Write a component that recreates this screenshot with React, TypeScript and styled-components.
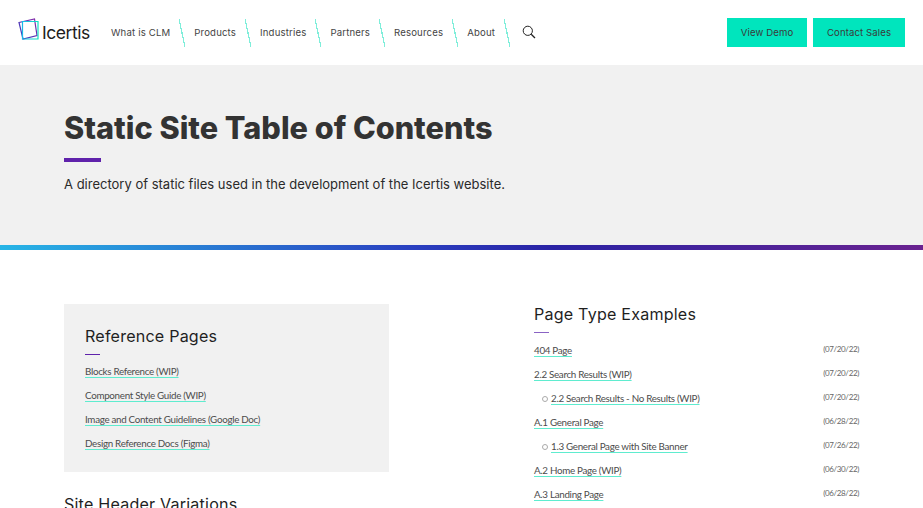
import styled, { createGlobalStyle } from 'styled-components';
import { Fragment } from 'react';

const GlobalStyle = createGlobalStyle`
  html, body {
    margin: 0;
    padding: 0;
    height: 100%;
    overflow: hidden;
    background: #ffffff;
  }
  * {
    box-sizing: border-box;
  }
`;

const Header = styled.header`
  height: 65px;
  display: flex;
  align-items: center;
  padding: 0 18px;
  background: #ffffff;
`;

const Logo = styled.a`
  display: flex;
  align-items: center;
  gap: 2px;
  width: 93px;
  flex: none;
  margin-top: -6px;
`;

const LogoText = styled.span`
  font-family: 'Inter', sans-serif;
  font-size: 17.5px;
  font-weight: 400;
  letter-spacing: -0.45px;
  color: #1c1c1c;
  margin-top: 5px;
`;

const Nav = styled.nav`
  display: flex;
  align-items: center;
  gap: 9px;
`;

const NavLink = styled.a`
  font-family: 'Inter', sans-serif;
  font-size: 9.6px;
  letter-spacing: 0.16px;
  color: #444444;
`;

const Slash = styled.span`
  width: 6px;
  height: 28px;
  flex: none;
  background: linear-gradient(
    to top right,
    transparent calc(50% - 0.6px),
    #7feeda calc(50% - 0.6px),
    #7feeda calc(50% + 0.6px),
    transparent calc(50% + 0.6px)
  );
`;

const SearchButton = styled.button`
  display: flex;
  border: 0;
  background: none;
  padding: 0;
  margin-left: 3px;
  margin-top: -1px;
`;

const Actions = styled.div`
  display: flex;
  gap: 6px;
  margin-left: auto;
`;

const CtaButton = styled.a<{ $width: number }>`
  width: ${p => p.$width}px;
  height: 29px;
  display: flex;
  align-items: center;
  justify-content: center;
  background: #00e5bd;
  font-family: 'Inter', sans-serif;
  font-size: 9.6px;
  letter-spacing: 0.1px;
  color: #3a3a3a;
`;

const Hero = styled.section`
  height: 180px;
  background: #f1f1f1;
  padding: 44px 64px 0;
`;

const Title = styled.h1`
  margin: 0;
  font-family: 'Inter', sans-serif;
  font-size: 30.65px;
  line-height: 38px;
  font-weight: 800;
  letter-spacing: 0;
  color: #333333;
`;

const HeroRule = styled.div`
  width: 37px;
  height: 4px;
  margin-top: 11px;
  background: #5f22ab;
`;

const Lead = styled.p`
  margin: 13px 0 0;
  font-family: 'Inter', sans-serif;
  font-size: 13px;
  line-height: 18px;
  letter-spacing: 0;
  color: #2a2a2a;
`;

const GradientBar = styled.div`
  height: 5px;
  background: linear-gradient(90deg, #27b5e6 0%, #2a3fc0 45%, #2a22a4 60%, #6a2290 100%);
`;

const Content = styled.main`
  display: grid;
  grid-template-columns: 325px 325px;
  column-gap: 145px;
  padding: 54px 64px 0;
`;

const LeftColumn = styled.div`
  display: flex;
  flex-direction: column;
`;

const Card = styled.section`
  height: 168px;
  background: #f1f1f1;
  padding: 20px 21px 0;
`;

const SectionTitle = styled.h2`
  margin: 0;
  font-family: 'Inter', sans-serif;
  font-size: 16.1px;
  line-height: 24px;
  font-weight: 400;
  letter-spacing: 0.2px;
  color: #1f1f1f;
`;

const SmallRule = styled.div`
  width: 15px;
  height: 1px;
  margin: 6px 0 4px;
  background: #5f22ab;
`;

const ColumnRule = styled(SmallRule)`
  margin-bottom: 5px;
  background: #8a63c4;
`;

const LinkList = styled.ul`
  list-style: none;
  margin: 0;
  padding: 0;
`;

const LinkRow = styled.li<{ $nested?: boolean }>`
  height: 24px;
  display: flex;
  align-items: center;
  justify-content: space-between;
  padding-left: ${p => (p.$nested ? 17 : 0)}px;
  position: relative;
  font-family: 'Lato', sans-serif;
  font-size: 9.8px;
  letter-spacing: -0.3px;

  ${p =>
    p.$nested &&
    `&::before {
      content: '';
      position: absolute;
      left: 8px;
      top: 10px;
      width: 4px;
      height: 4px;
      border: 1px solid #aaaaaa;
      border-radius: 50%;
    }`}
`;

const PageLink = styled.a`
  color: #4c4c4c;
  text-decoration: underline;
  text-decoration-color: #5feccf;
  text-decoration-thickness: 1px;
  text-underline-offset: 2px;
`;

const DateLabel = styled.span`
  font-size: 8px;
  letter-spacing: -0.35px;
  color: #666666;
  margin-top: -3px;
`;

const SubHeading = styled(SectionTitle)`
  margin-top: 20px;
`;

const RightColumn = styled.section`
  margin-top: -2px;
`;

const referenceLinks = [
  'Blocks Reference (WIP)',
  'Component Style Guide (WIP)',
  'Image and Content Guidelines (Google Doc)',
  'Design Reference Docs (Figma)',
];

const pageTypes = [
  { name: '404 Page', date: '(07/20/22)' },
  { name: '2.2 Search Results (WIP)', date: '(07/20/22)' },
  { name: '2.2 Search Results - No Results (WIP)', date: '(07/20/22)', nested: true },
  { name: 'A.1 General Page', date: '(06/28/22)' },
  { name: '1.3 General Page with Site Banner', date: '(07/26/22)', nested: true },
  { name: 'A.2 Home Page (WIP)', date: '(06/30/22)' },
  { name: 'A.3 Landing Page', date: '(06/28/22)' },
];

const navItems = ['What is CLM', 'Products', 'Industries', 'Partners', 'Resources', 'About'];

function LogoMark() {
  return (
    <svg width="22" height="24" viewBox="0 0 22 24" fill="none">
      <defs>
        <linearGradient id="logoBack" x1="0" y1="1" x2="1" y2="0">
          <stop offset="0" stopColor="#2a3fc0" />
          <stop offset="1" stopColor="#8a2aa8" />
        </linearGradient>
        <linearGradient id="logoFront" x1="0" y1="1" x2="1" y2="1">
          <stop offset="0" stopColor="#18b8e8" />
          <stop offset="1" stopColor="#10e0c0" />
        </linearGradient>
      </defs>
      <path d="M1 4.5 L16.5 1 L19 17.5 L5 21 Z" stroke="url(#logoBack)" strokeWidth="1.2" />
      <path d="M4.5 3.5 H20 V21 H4.5 Z" stroke="url(#logoFront)" strokeWidth="1.2" />
    </svg>
  );
}

export default function App() {
  return (
    <>
      <GlobalStyle />
      <Header>
        <Logo>
          <LogoMark />
          <LogoText>Icertis</LogoText>
        </Logo>
        <Nav>
          {navItems.map(item => (
            <Fragment key={item}>
              <NavLink>{item}</NavLink>
              <Slash />
            </Fragment>
          ))}
          <SearchButton aria-label="Search">
            <svg width="14" height="14" viewBox="0 0 14 14" fill="none" stroke="#222222">
              <circle cx="5.8" cy="5.8" r="4.6" strokeWidth="1" />
              <path d="M9.2 9.2 L13 13" strokeWidth="1.3" />
            </svg>
          </SearchButton>
        </Nav>
        <Actions>
          <CtaButton $width={80}>View Demo</CtaButton>
          <CtaButton $width={92}>Contact Sales</CtaButton>
        </Actions>
      </Header>
      <Hero>
        <Title>Static Site Table of Contents</Title>
        <HeroRule />
        <Lead>A directory of static files used in the development of the Icertis website.</Lead>
      </Hero>
      <GradientBar />
      <Content>
        <LeftColumn>
          <Card>
            <SectionTitle>Reference Pages</SectionTitle>
            <SmallRule />
            <LinkList>
              {referenceLinks.map(link => (
                <LinkRow key={link}>
                  <PageLink>{link}</PageLink>
                </LinkRow>
              ))}
            </LinkList>
          </Card>
          <SubHeading>Site Header Variations</SubHeading>
        </LeftColumn>
        <RightColumn>
          <SectionTitle>Page Type Examples</SectionTitle>
          <ColumnRule />
          <LinkList>
            {pageTypes.map(page => (
              <LinkRow key={page.name} $nested={page.nested}>
                <PageLink>{page.name}</PageLink>
                <DateLabel>{page.date}</DateLabel>
              </LinkRow>
            ))}
          </LinkList>
        </RightColumn>
      </Content>
    </>
  );
}
